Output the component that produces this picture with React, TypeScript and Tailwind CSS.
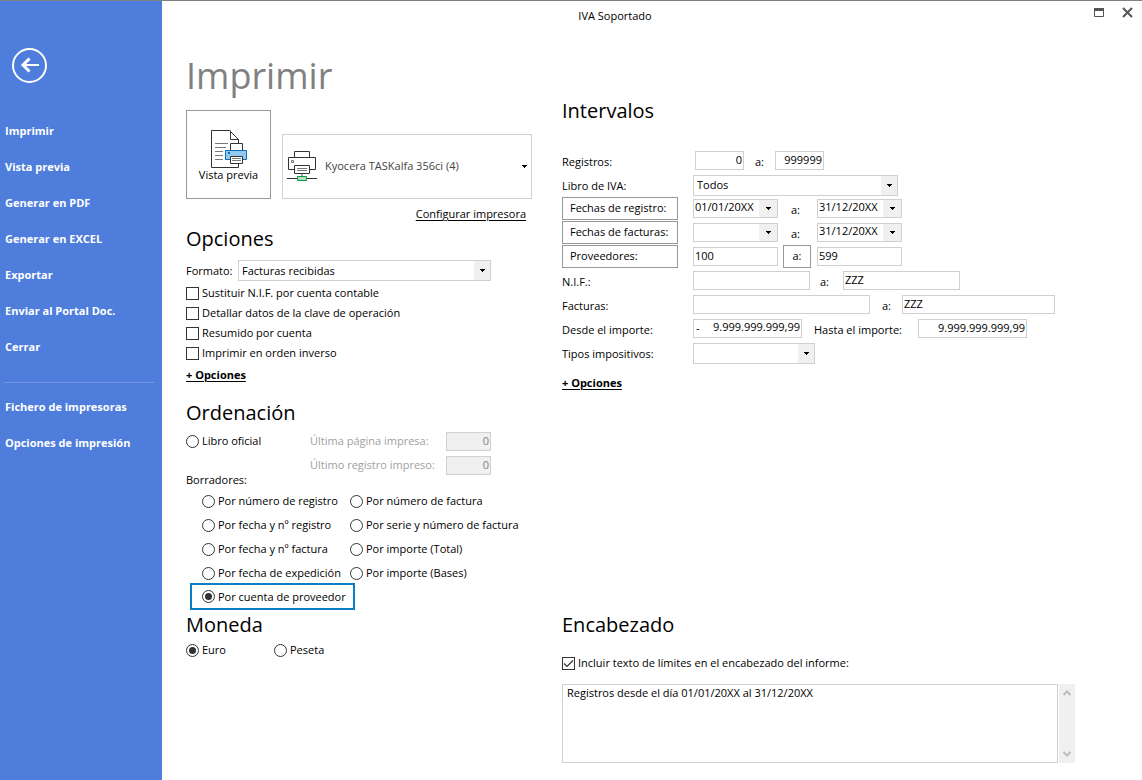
import type { ReactNode } from "react";
import clsx from "clsx";

const mainLinks = [
  "Imprimir",
  "Vista previa",
  "Generar en PDF",
  "Generar en EXCEL",
  "Exportar",
  "Enviar al Portal Doc.",
  "Cerrar",
];

const setupLinks = ["Fichero de impresoras", "Opciones de impresión"];

const reportOptions = [
  "Sustituir N.I.F. por cuenta contable",
  "Detallar datos de la clave de operación",
  "Resumido por cuenta",
  "Imprimir en orden inverso",
];

const draftOrders = [
  ["Por número de registro", "Por número de factura"],
  ["Por fecha y nº registro", "Por serie y número de factura"],
  ["Por fecha y nº factura", "Por importe (Total)"],
  ["Por fecha de expedición", "Por importe (Bases)"],
];

function Caret() {
  return (
    <svg viewBox="0 0 5 3" className="h-[3px] w-[5px]" shapeRendering="crispEdges" aria-hidden="true">
      <path d="M0 0h5v1H4v1H3v1H2V2H1V1H0z" fill="#000" />
    </svg>
  );
}

function Heading({ children, className }: { children: ReactNode; className?: string }) {
  return <h2 className={clsx("text-[20px] leading-7", className)}>{children}</h2>;
}

function Radio({ name, label, checked }: { name: string; label: string; checked?: boolean }) {
  return (
    <label className="flex items-center gap-[3px] whitespace-nowrap">
      <input
        type="radio"
        name={name}
        defaultChecked={checked}
        className="grid size-[13px] shrink-0 appearance-none place-content-center rounded-full border border-[#333] bg-white before:size-[7px] before:rounded-full checked:before:bg-[#333]"
      />
      {label}
    </label>
  );
}

function Checkbox({ label, checked }: { label: string; checked?: boolean }) {
  return (
    <label className="flex h-5 items-center gap-[3px] whitespace-nowrap">
      <span className="relative flex">
        <input
          type="checkbox"
          defaultChecked={checked}
          className="peer size-[13px] appearance-none border border-[#333] bg-white"
        />
        <svg
          viewBox="0 0 13 13"
          className="pointer-events-none absolute inset-0 hidden size-[13px] peer-checked:block"
          aria-hidden="true"
        >
          <path d="M2 6.500 5 9.500l6-6" fill="none" stroke="#333" strokeWidth="1.2" />
        </svg>
      </span>
      {label}
    </label>
  );
}

function Select({ label, value, className }: { label: string; value: string; className: string }) {
  return (
    <div className={clsx("relative h-[21px]", className)}>
      <select
        aria-label={label}
        defaultValue={value}
        className="block h-full w-full appearance-none border border-[#d0d0d0] bg-white pr-5 pl-[3px]"
      >
        <option>{value}</option>
      </select>
      <span className="pointer-events-none absolute inset-y-px right-px flex w-4 items-center justify-center bg-[#f0f0f0]">
        <Caret />
      </span>
    </div>
  );
}

function Field({
  label,
  value = "",
  className,
  disabled,
}: {
  label: string;
  value?: string;
  className: string;
  disabled?: boolean;
}) {
  return (
    <input
      type="text"
      aria-label={label}
      defaultValue={value}
      disabled={disabled}
      className={clsx(
        "h-[19px] min-w-0 border border-[#d0d0d0] px-px pb-0.5",
        disabled ? "bg-[#f0f0f0] text-[#808080]" : "bg-white",
        className,
      )}
    />
  );
}

function DateField({ label, value = "" }: { label: string; value?: string }) {
  return (
    <div className="flex h-[19px] w-[85px] border border-[#d0d0d0]">
      <input type="text" aria-label={label} defaultValue={value} className="w-0 grow px-px pb-0.5" />
      <button
        type="button"
        aria-label={"Abrir calendario: " + label}
        className="flex w-[18px] items-center justify-center bg-[#f0f0f0]"
      >
        <Caret />
      </button>
    </div>
  );
}

function Row({ label, children }: { label: ReactNode; children: ReactNode }) {
  return (
    <div className="flex h-6 items-center">
      <div className="w-[131px] shrink-0">
        {typeof label === "string" ? <span className="block pt-[3px]">{label}</span> : label}
      </div>
      {children}
    </div>
  );
}

function RangeButton({ children, className }: { children: ReactNode; className: string }) {
  return (
    <button type="button" className={clsx("h-[23px] border border-[#999]", className)}>
      {children}
    </button>
  );
}

function PreviewIcon() {
  return (
    <svg viewBox="0 0 38 39" className="h-[39px] w-[38px]" fill="none" aria-hidden="true">
      <path d="M1.5 1.5h18l9 9v28h-27z" fill="#fff" stroke="#333" />
      <path d="M20.5 1.5v9h8" stroke="#333" />
      <path d="M5 14.5h13M5 18.5h11M5 22.5h8M5 26.5h8M5 30.5h8" stroke="#777" />
      <path d="M20.5 14.5h12v7h-12z" fill="#fff" stroke="#333" />
      <path d="M15.5 21.5h21v9h-21z" fill="#91c9f1" stroke="#0f6cbd" />
      <path d="M18 23h2v2h-2z" fill="#0f6cbd" />
      <path d="M20.5 27.5h12v7h-12z" fill="#fff" stroke="#333" />
      <path d="M22 29.5h9M22 31.5h9" stroke="#777" />
    </svg>
  );
}

function PrinterIcon() {
  return (
    <svg viewBox="0 0 30 31" className="h-[31px] w-[30px] shrink-0" fill="none" aria-hidden="true">
      <path d="M7.5.5h15v6h-15z" fill="#fff" stroke="#333" />
      <path d="M1.5 6.5h27v12h-27z" fill="#fff" stroke="#333" />
      <path d="M4.5 9.500h2v2h-2z" stroke="#777" />
      <path d="M7.5 14.5h15v8h-15z" fill="#fff" stroke="#333" />
      <path d="M10 17.5h10M10 19.5h10" stroke="#777" />
      <path d="M15 23v2" stroke="#aaa" strokeWidth="2" />
      <path d="M0 27.5h30" stroke="#333" />
      <path d="M10.5 25.5h9v4h-9z" fill="#b5dfb8" stroke="#109648" />
    </svg>
  );
}

function Sidebar() {
  return (
    <aside className="w-[162px] shrink-0 bg-[#4e7ddc] pt-[47px] font-bold text-white">
      <button type="button" aria-label="Volver" className="ml-3 block">
        <svg viewBox="0 0 35 35" className="size-[35px]" fill="none" stroke="#fff" strokeWidth="2">
          <circle cx="17.5" cy="17.5" r="16.5" />
          <path d="M11 17h16" />
          <path d="M17.500 10.500 11 17l6.500 6.500" strokeWidth="3" />
        </svg>
      </button>
      <nav className="mt-[30px]">
        {mainLinks.map((item) => (
          <a key={item} href="#" className="flex h-9 items-center pl-[5px]">
            {item}
          </a>
        ))}
        <hr className="mt-[17px] mr-2 mb-[6px] ml-1 border-[#7398e4]" />
        {setupLinks.map((item) => (
          <a key={item} href="#" className="flex h-9 items-center pl-[5px]">
            {item}
          </a>
        ))}
      </nav>
    </aside>
  );
}

function TitleBar() {
  return (
    <header className="flex h-[30px] items-center">
      <span className="grow text-center">IVA Soportado</span>
      <div className="flex w-[74px] items-center justify-between pr-[9px] pb-2 pl-[26px]">
        <button type="button" aria-label="Maximizar">
          <svg viewBox="0 0 10 9" className="h-[9px] w-[10px]" fill="none">
            <path d="M.5.5h9v8h-9z" stroke="#555" />
            <path d="M0 0h10v3H0z" fill="#555" />
          </svg>
        </button>
        <button type="button" aria-label="Cerrar ventana">
          <svg viewBox="0 0 11 11" className="size-[11px]" stroke="#555" strokeWidth="2">
            <path d="m1 1 9 9M10 1 1 10" />
          </svg>
        </button>
      </div>
    </header>
  );
}

function PrintPanel() {
  return (
    <section>
      <h1 className="text-[36px] leading-[50px] text-[#808080]">Imprimir</h1>
      <div className="mt-[9px] flex items-end gap-[11px]">
        <button
          type="button"
          className="flex h-[89px] w-[85px] flex-col items-center border border-[#999] pt-[18px]"
        >
          <PreviewIcon />
          <span className="leading-[14px]">Vista previa</span>
        </button>
        <button
          type="button"
          className="flex h-[65px] w-[250px] items-center gap-2 border border-[#d0d0d0] px-1 text-[#444]"
        >
          <PrinterIcon />
          <span className="grow pb-0.5 text-left">Kyocera TASKalfa 356ci (4)</span>
          <Caret />
        </button>
      </div>
      <div className="mt-[7px] w-[340px] text-right">
        <a href="#" className="underline underline-offset-2">
          Configurar impresora
        </a>
      </div>

      <Heading className="mt-[3px]">Opciones</Heading>
      <div className="mt-[7px] flex items-center">
        <span className="w-[52px]">Formato:</span>
        <Select label="Formato" value="Facturas recibidas" className="w-[253px]" />
      </div>
      <div className="mt-[2px]">
        {reportOptions.map((option) => (
          <Checkbox key={option} label={option} />
        ))}
      </div>
      <a href="#" className="mt-1 block font-bold underline underline-offset-2">
        + Opciones
      </a>

      <Heading className="mt-4">Ordenación</Heading>
      <div className="mt-[2px] flex items-start">
        <div className="flex h-6 w-[124px] items-center">
          <Radio name="orden" label="Libro oficial" />
        </div>
        <div className="text-[#a0a0a0]">
          <div className="flex h-6 items-center">
            <span className="w-[136px]">Última página impresa:</span>
            <Field label="Última página impresa" value="0" className="w-[45px] text-right" disabled />
          </div>
          <div className="flex h-6 items-center">
            <span className="w-[136px]">Último registro impreso:</span>
            <Field label="Último registro impreso" value="0" className="w-[45px] text-right" disabled />
          </div>
        </div>
      </div>
      <p className="leading-[6px]">Borradores:</p>
      <div className="mt-[6px] ml-4 grid grid-cols-[148px_1fr]">
        {draftOrders.flat().map((order) => (
          <div key={order} className="flex h-6 items-center">
            <Radio name="orden" label={order} />
          </div>
        ))}
      </div>
      <div className="-mt-[2px] ml-1 flex h-[27px] w-[165px] items-center border-2 border-[#0a80c4] pl-2.5">
        <Radio name="orden" label="Por cuenta de proveedor" checked />
      </div>
    </section>
  );
}

function RangesPanel() {
  return (
    <section className="pt-[46px]">
      <Heading>Intervalos</Heading>
      <div className="mt-[23px]">
        <Row label="Registros:">
          <Field label="Registros desde" value="0" className="ml-[2px] w-[49px] text-right" />
          <span className="w-[31px] pt-[3px] text-center">a:</span>
          <Field label="Registros hasta" value="999999" className="w-[49px] text-right" />
        </Row>
        <Row label="Libro de IVA:">
          <Select label="Libro de IVA" value="Todos" className="mt-0.5 w-[205px]" />
        </Row>
        <Row label={<RangeButton className="block w-[116px] pl-[7px] text-left">Fechas de registro:</RangeButton>}>
          <DateField label="Fecha de registro desde" value="01/01/20XX" />
          <span className="w-[39px] pt-[3px] pl-[13px]">a:</span>
          <DateField label="Fecha de registro hasta" value="31/12/20XX" />
        </Row>
        <Row label={<RangeButton className="block w-[116px] pl-[7px] text-left">Fechas de facturas:</RangeButton>}>
          <DateField label="Fecha de factura desde" />
          <span className="w-[39px] pt-[3px] pl-[13px]">a:</span>
          <DateField label="Fecha de factura hasta" value="31/12/20XX" />
        </Row>
        <Row label={<RangeButton className="block w-[116px] pl-[7px] text-left">Proveedores:</RangeButton>}>
          <Field label="Proveedor desde" value="100" className="w-[85px]" />
          <RangeButton className="mr-1.5 ml-[5px] w-7">a:</RangeButton>
          <Field label="Proveedor hasta" value="599" className="w-[85px]" />
        </Row>
        <Row label="N.I.F.:">
          <Field label="N.I.F. desde" className="w-[117px]" />
          <span className="w-[33px] pt-[3px] pl-2.5">a:</span>
          <Field label="N.I.F. hasta" value="ZZZ" className="w-[117px]" />
        </Row>
        <Row label="Facturas:">
          <Field label="Factura desde" className="w-[177px]" />
          <span className="w-8 pt-[3px] pl-3">a:</span>
          <Field label="Factura hasta" value="ZZZ" className="w-[153px]" />
        </Row>
        <Row label="Desde el importe:">
          <div className="flex h-[19px] w-[109px] border border-[#d0d0d0] px-px">
            <span className="pl-px">-</span>
            <input
              type="text"
              aria-label="Desde el importe"
              defaultValue="9.999.999.999,99"
              className="w-0 grow pb-0.5 text-right"
            />
          </div>
          <span className="w-[116px] pt-[3px] pl-3">Hasta el importe:</span>
          <Field label="Hasta el importe" value="9.999.999.999,99" className="w-[109px] text-right" />
        </Row>
        <Row label="Tipos impositivos:">
          <Select label="Tipos impositivos" value="" className="mt-0.5 w-[122px]" />
        </Row>
      </div>
      <a href="#" className="mt-[11px] inline-block font-bold underline underline-offset-2">
        + Opciones
      </a>
    </section>
  );
}

function CurrencyPanel() {
  return (
    <section className="pt-px">
      <Heading>Moneda</Heading>
      <div className="flex h-[22px] items-center">
        <div className="w-[88px]">
          <Radio name="moneda" label="Euro" checked />
        </div>
        <Radio name="moneda" label="Peseta" />
      </div>
    </section>
  );
}

function HeaderTextPanel() {
  return (
    <section className="pt-px pr-[67px]">
      <Heading>Encabezado</Heading>
      <div className="mt-[14px]">
        <Checkbox label="Incluir texto de límites en el encabezado del informe:" checked />
      </div>
      <div className="mt-[11px] flex h-[79px] gap-px">
        <textarea
          aria-label="Texto del encabezado"
          defaultValue="Registros desde el día 01/01/20XX al 31/12/20XX"
          className="grow resize-none border border-[#d0d0d0] px-1"
        />
        <div className="flex w-4 flex-col items-center justify-between bg-[#f0f0f0] py-1.5">
          <svg viewBox="0 0 8 6" className="h-1.5 w-2" fill="none" stroke="#bcbcbc" strokeWidth="2">
            <path d="M.5 5 4 1.500 7.500 5" />
          </svg>
          <svg viewBox="0 0 8 6" className="h-1.5 w-2" fill="none" stroke="#bcbcbc" strokeWidth="2">
            <path d="M.5 1 4 4.500 7.500 1" />
          </svg>
        </div>
      </div>
    </section>
  );
}

export default function App() {
  return (
    <div className="flex min-h-screen border-t border-[#808080] bg-white font-['Open_Sans','Noto_Sans',sans-serif] text-[11px] leading-4 text-black">
      <Sidebar />
      <main className="min-w-0 grow">
        <TitleBar />
        <div className="mt-5 grid grid-cols-[376px_1fr] pl-6">
          <PrintPanel />
          <RangesPanel />
          <CurrencyPanel />
          <HeaderTextPanel />
        </div>
      </main>
    </div>
  );
}
